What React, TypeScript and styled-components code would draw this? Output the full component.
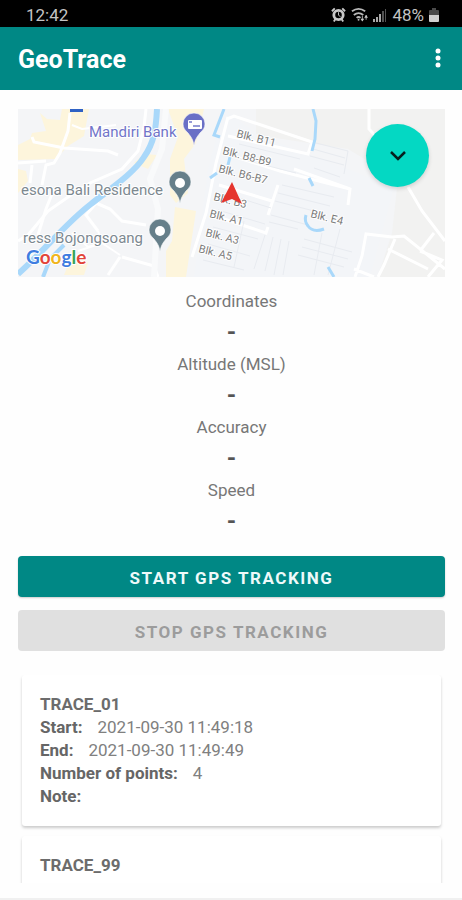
import React from "react";
import styled, { createGlobalStyle } from "styled-components";

const TEAL = "#008885";

const GlobalStyle = createGlobalStyle`
  *, *::before, *::after { box-sizing: border-box; }
  body {
    margin: 0;
    background: #fefefe;
    color: #777;
    font-family: Roboto, "Liberation Sans", sans-serif;
    font-size: 17px;
  }
`;

const Screen = styled.div`
  display: flex;
  flex-direction: column;
  height: 100vh;
  overflow: hidden;
`;

const StatusBar = styled.div`
  flex: none;
  display: flex;
  align-items: center;
  justify-content: space-between;
  height: 27px;
  padding: 3px 23px 0 26px;
  background: #000;
  color: #c4c4c4;
  font-size: 17px;
  line-height: 24px;
`;

const StatusIcons = styled.div`
  display: flex;
  align-items: center;
  gap: 5px;
`;

const AppBar = styled.header`
  flex: none;
  display: flex;
  align-items: center;
  justify-content: space-between;
  height: 63px;
  padding: 3px 13px 0 18px;
  background: ${TEAL};
  color: #fff;
`;

const AppTitle = styled.h1`
  margin: 0;
  font-size: 25px;
  font-weight: 700;
  line-height: 32px;
`;

const MenuButton = styled.button`
  display: flex;
  padding: 0 8px 4px;
  border: 0;
  background: none;
  color: inherit;
`;

const Main = styled.main`
  flex: 1;
  min-height: 0;
  display: flex;
  flex-direction: column;
  padding: 19px 17px 0 18px;
`;

const MapPanel = styled.section`
  position: relative;
  flex: none;
  height: 168px;
  overflow: hidden;
  background: #f2f3f5;
`;

const MapDrawing = styled.svg`
  display: block;
  width: 100%;
  height: 100%;
`;

const ToggleButton = styled.button`
  position: absolute;
  top: 15px;
  right: 16px;
  display: flex;
  align-items: center;
  justify-content: center;
  width: 63px;
  height: 63px;
  padding: 0;
  border: 0;
  border-radius: 50%;
  background: #04d8c3;
  color: #06201e;
  box-shadow: 0 2px 4px rgba(0, 0, 0, 0.14);
`;

const Readings = styled.dl`
  flex: none;
  margin: 0;
  padding: 12px 0 15px;
  text-align: center;
`;

const ReadingLabel = styled.dt`
  font-size: 17px;
  line-height: 24px;
`;

const ReadingValue = styled.dd`
  margin: 0;
  color: #555;
  font-size: 24px;
  font-weight: 700;
  line-height: 39px;
`;

const Actions = styled.div`
  flex: none;
  display: flex;
  flex-direction: column;
  gap: 13px;
`;

const ActionButton = styled.button`
  height: 41px;
  padding: 2px 16px 0;
  border: 0;
  border-radius: 4px;
  background: ${TEAL};
  color: #eefafa;
  font: 700 17px/24px Roboto, "Liberation Sans", sans-serif;
  letter-spacing: 0.09em;
  text-transform: uppercase;
  box-shadow: 0 1px 2px rgba(0, 0, 0, 0.2);

  &:disabled {
    background: #e0e0e0;
    color: #9c9c9c;
    box-shadow: none;
  }
`;

const TraceList = styled.ul`
  flex: 1;
  min-height: 0;
  display: flex;
  flex-direction: column;
  gap: 10px;
  margin: 24px 0 0;
  padding: 0 4px;
  overflow-y: auto;
  scrollbar-width: none;
  list-style: none;
`;

const TraceCard = styled.li`
  flex: none;
  padding: 18px;
  border-radius: 3px;
  background: #fff;
  box-shadow: 0 2px 3px rgba(0, 0, 0, 0.2);
`;

const TraceName = styled.h2`
  margin: 0;
  color: #6c6c6c;
  font-size: 17px;
  font-weight: 700;
  line-height: 23px;
`;

const TraceFields = styled.dl`
  margin: 0;
`;

const TraceField = styled.div`
  display: flex;
  gap: 15px;
  height: 23px;
  line-height: 23px;
`;

const FieldName = styled.dt`
  color: #666;
  font-weight: 700;
`;

const FieldValue = styled.dd`
  margin: 0;
  color: #808080;
`;

const NavigationEdge = styled.footer`
  flex: none;
  height: 17px;
  border-bottom: 2px solid #f0f0f0;
`;

const MapText = styled.text<{ $size: number }>`
  font-family: Roboto, "Liberation Sans", sans-serif;
  font-size: ${(p) => p.$size}px;
  stroke: #fff;
  stroke-width: 2px;
  stroke-linejoin: round;
  paint-order: stroke;
`;

const LogoText = styled.text`
  font-family: Lato, sans-serif;
  font-size: 19px;
  font-weight: 700;
  stroke: #fff;
  stroke-width: 2px;
  paint-order: stroke;
`;

const blocks = [
  { name: "B11", x: 218, y: 28 },
  { name: "B8-B9", x: 204, y: 45 },
  { name: "B6-B7", x: 200, y: 63 },
  { name: "B3", x: 195, y: 91 },
  { name: "A1", x: 191, y: 108 },
  { name: "A3", x: 187, y: 127 },
  { name: "A5", x: 180, y: 143 },
  { name: "E4", x: 292, y: 108 },
];

const logoLetters = [
  ["G", "#3f7de0"],
  ["o", "#e2443a"],
  ["o", "#f0b51c"],
  ["g", "#3f7de0"],
  ["l", "#35a555"],
  ["e", "#e2443a"],
];

function Pin({ x, y, color, bank }: { x: number; y: number; color: string; bank?: boolean }) {
  return (
    <g transform={`translate(${x} ${y})`}>
      <path
        d="M0 0C-1-7-3-9-6-13C-9-16-11-18-11-22A11 11 0 0 1 11-22C11-18 9-16 6-13C3-9 1-7 0 0Z"
        fill={color}
        stroke="#fff"
        strokeOpacity="0.6"
      />
      {bank ? (
        <g>
          <rect x="-6" y="-26" width="14" height="9" rx="1" fill="#fff" />
          <path d="M-5-24h3M-1-20h7" stroke={color} strokeOpacity="0.7" strokeWidth="2" />
        </g>
      ) : (
        <circle cy="-21" r="5" fill="#fff" />
      )}
    </g>
  );
}

function TrackMap() {
  return (
    <MapDrawing viewBox="0 0 427 168" preserveAspectRatio="xMidYMid slice" role="img" aria-label="Map">
      <rect width="427" height="168" fill="#f4f5f7" />
      <path d="M238 0H427V168H360L374 124L380 70L330 40L238 26Z" fill="#f2f2f1" />
      <path d="M206 0L190 60L176 168H352L376 78L240 26Z" fill="#f3f5f8" />
      <g fill="#fdf5dc">
        <path d="M22 4L29 10L42 11L44 0H71L66 27L50 37L38 50L0 51V36L12 30L14 24L28 22Z" />
        <path d="M0 60L8 62L10 72L0 84Z" />
        <path d="M150 0H186L178 34L166 50L170 84L158 94L152 86L152 50L160 28Z" />
        <path d="M157 98L178 102L168 168H148L148 142L154 132Z" />
        <path d="M46 166L50 156L64 147L70 154L66 166Z" />
        <path d="M116 54L126 45L139 46L130 60Z" />
      </g>
      <g fill="none" stroke="#fff" strokeWidth="3">
        <path d="M52 4L50 22L42 44L36 54L28 56L24 76M14 28L16 33L46 39L90 42L100 46M0 54L28 52M14 56L12 74" />
        <path d="M54 16L64 20L98 16" strokeWidth="2" />
        <path d="M128 0L126 18L120 42L104 60L72 74L53 86L30 102L10 126L0 132" />
        <path d="M36 80L28 100L20 126M78 94L92 100L104 112L128 116M80 92L68 106L80 122M102 148L90 166M104 148L136 157L140 168" />
        <path d="M60 142L84 134L102 146M54 124L70 138L84 134L80 122" strokeWidth="2" />
        <path d="M148 0L144 40L132 70L140 100L136 168" strokeWidth="6" stroke="#f9fafb" />
        <path d="M210 8L198 54L188 104L174 148M209 10L216 7L294 33L290 45L210 27" />
        <path d="M205 44L262 62L332 80L330 96M276 60L332 80M201 76L254 92M260 76L250 106M194 106L248 124L250 118" />
        <path d="M351 0L351 20L362 32M390 78L404 102L427 132M337 168L344 147L348 125L374 128L386 127L427 160M377 130L366 156L360 168M416 124L402 142M370 140L410 160M336 160L356 168M402 142L424 151L410 168" />
      </g>
      <g fill="none" stroke="#e8ebf0" strokeWidth="1">
        <path d="M298 34L330 42L326 65M295 40L327 49M292 47L326 56M296 59L322 68M264 76L316 88M260 84L312 97M257 92L300 103M253 106L290 116M251 113L280 120M247 126L236 160M255 128L247 162M263 130L256 166M271 132L265 166M286 130L334 143M284 138L330 150M280 146L326 158M226 112L216 158M304 124L296 166M322 120L310 166" />
        <path d="M221 35L282 50M215 48L278 64M205 84L253 99M200 101L247 115M195 118L240 130M190 135L232 147M185 151L226 161" />
      </g>
      <g fill="none" stroke="#a9d8fa">
        <path d="M139 0C138 20 136 34 126 48C116 64 92 80 73 95C48 114 28 140 0 165" strokeWidth="6" />
        <path d="M46 136L32 150L25 168" strokeWidth="4" />
        <path d="M206 0L196 26L202 28" strokeWidth="3" />
        <path d="M295 0L298 12L297 30L294 42M212 48L210 56M291 69L295 77M199 64L192 69M310 158L316 168" strokeWidth="3" />
        <path d="M288 106Q286 112 290 117Q295 124 306 120" strokeWidth="3" />
      </g>
      <rect x="52" y="0" width="13" height="3" fill="#2f62c4" />
      <MapText $size={15} x="71" y="28" fill="#7175c9">Mandiri Bank</MapText>
      <MapText $size={15} x="145" y="86" textAnchor="end" fill="#7c8890">esona Bali Residence</MapText>
      <MapText $size={15} x="125" y="134" textAnchor="end" fill="#7c8890">ress Bojongsoang</MapText>
      <Pin x={176} y={37} color="#6a70c6" bank />
      <Pin x={162} y={95} color="#667f8a" />
      <Pin x={142} y={143} color="#667f8a" />
      {blocks.map((b) => (
        <MapText key={b.name} $size={11} fill="#7d7d7d" transform={`translate(${b.x} ${b.y}) rotate(14)`}>
          Blk. {b.name}
        </MapText>
      ))}
      <path d="M214 73L224 95L214 90L203 94Z" fill="#e5352e" />
      <LogoText x="8" y="155">
        {logoLetters.map(([letter, color], i) => (
          <tspan key={i} fill={color}>{letter}</tspan>
        ))}
      </LogoText>
    </MapDrawing>
  );
}

function AlarmIcon() {
  return (
    <svg width="15" height="16" viewBox="0 0 16 16" fill="none" stroke="#c8c8c8" aria-hidden="true">
      <path d="M1 4L4 1M15 4L12 1M3 15L5 12M13 15L11 12" strokeWidth="2" />
      <circle cx="8" cy="8" r="5" strokeWidth="3" />
      <path d="M8 5V8L10 10" strokeWidth="1" />
    </svg>
  );
}

function WifiIcon() {
  return (
    <svg width="17" height="16" viewBox="0 0 18 16" fill="none" stroke="#b8b8b8" strokeWidth="2" aria-hidden="true">
      <path d="M1 4Q8-1 15 4M3 8Q8 4 13 8M6 11Q8 9 10 11" />
      <path d="M12 9V14M16 8V13" strokeWidth="1" />
      <path d="M10 12H14L12 15ZM14 11H18L16 8Z" fill="#c8c8c8" stroke="none" />
      <circle cx="8" cy="13" r="1" fill="#b8b8b8" stroke="none" />
    </svg>
  );
}

function SignalIcon() {
  return (
    <svg width="14" height="14" viewBox="0 0 14 14" aria-hidden="true">
      <path d="M0 11h2v3H0zM3 9h2v5H3zM6 6h2v8H6z" fill="#a8a8a8" />
      <path d="M9 3h2v11H9zM12 1h1v13h-1z" fill="#525252" />
    </svg>
  );
}

function BatteryIcon() {
  return (
    <svg width="10" height="14" viewBox="0 0 10 14" aria-hidden="true">
      <path d="M3 0H7V2H9Q10 2 10 3V7H0V3Q0 2 1 2H3Z" fill="#4a4a4a" />
      <path d="M0 7H10V13Q10 14 9 14H1Q0 14 0 13Z" fill="#d0d0d0" />
    </svg>
  );
}

const readings = [
  { label: "Coordinates", value: "-" },
  { label: "Altitude (MSL)", value: "-" },
  { label: "Accuracy", value: "-" },
  { label: "Speed", value: "-" },
];

const traces = [
  {
    name: "TRACE_01",
    fields: [
      ["Start:", "2021-09-30 11:49:18"],
      ["End:", "2021-09-30 11:49:49"],
      ["Number of points:", "4"],
      ["Note:", ""],
    ],
  },
  { name: "TRACE_99", fields: [] },
];

export default function App() {
  return (
    <Screen>
      <GlobalStyle />
      <StatusBar>
        <span>12:42</span>
        <StatusIcons>
          <AlarmIcon />
          <WifiIcon />
          <SignalIcon />
          <span>48%</span>
          <BatteryIcon />
        </StatusIcons>
      </StatusBar>
      <AppBar>
        <AppTitle>GeoTrace</AppTitle>
        <MenuButton type="button" aria-label="More options">
          <svg width="6" height="20" viewBox="0 0 6 20" fill="currentColor" aria-hidden="true">
            <circle cx="3" cy="3" r="2.5" />
            <circle cx="3" cy="10" r="2.5" />
            <circle cx="3" cy="17" r="2.5" />
          </svg>
        </MenuButton>
      </AppBar>
      <Main>
        <MapPanel>
          <TrackMap />
          <ToggleButton type="button" aria-label="Collapse map">
            <svg width="18" height="12" viewBox="0 0 18 12" fill="none" stroke="currentColor" strokeWidth="2.5" aria-hidden="true">
              <path d="M2 2L9 9L16 2" />
            </svg>
          </ToggleButton>
        </MapPanel>
        <Readings>
          {readings.map((r) => (
            <div key={r.label}>
              <ReadingLabel>{r.label}</ReadingLabel>
              <ReadingValue>{r.value}</ReadingValue>
            </div>
          ))}
        </Readings>
        <Actions>
          <ActionButton type="button">Start GPS Tracking</ActionButton>
          <ActionButton type="button" disabled>Stop GPS Tracking</ActionButton>
        </Actions>
        <TraceList>
          {traces.map((t) => (
            <TraceCard key={t.name}>
              <TraceName>{t.name}</TraceName>
              <TraceFields>
                {t.fields.map(([name, value]) => (
                  <TraceField key={name}>
                    <FieldName>{name}</FieldName>
                    <FieldValue>{value}</FieldValue>
                  </TraceField>
                ))}
              </TraceFields>
            </TraceCard>
          ))}
        </TraceList>
      </Main>
      <NavigationEdge />
    </Screen>
  );
}
